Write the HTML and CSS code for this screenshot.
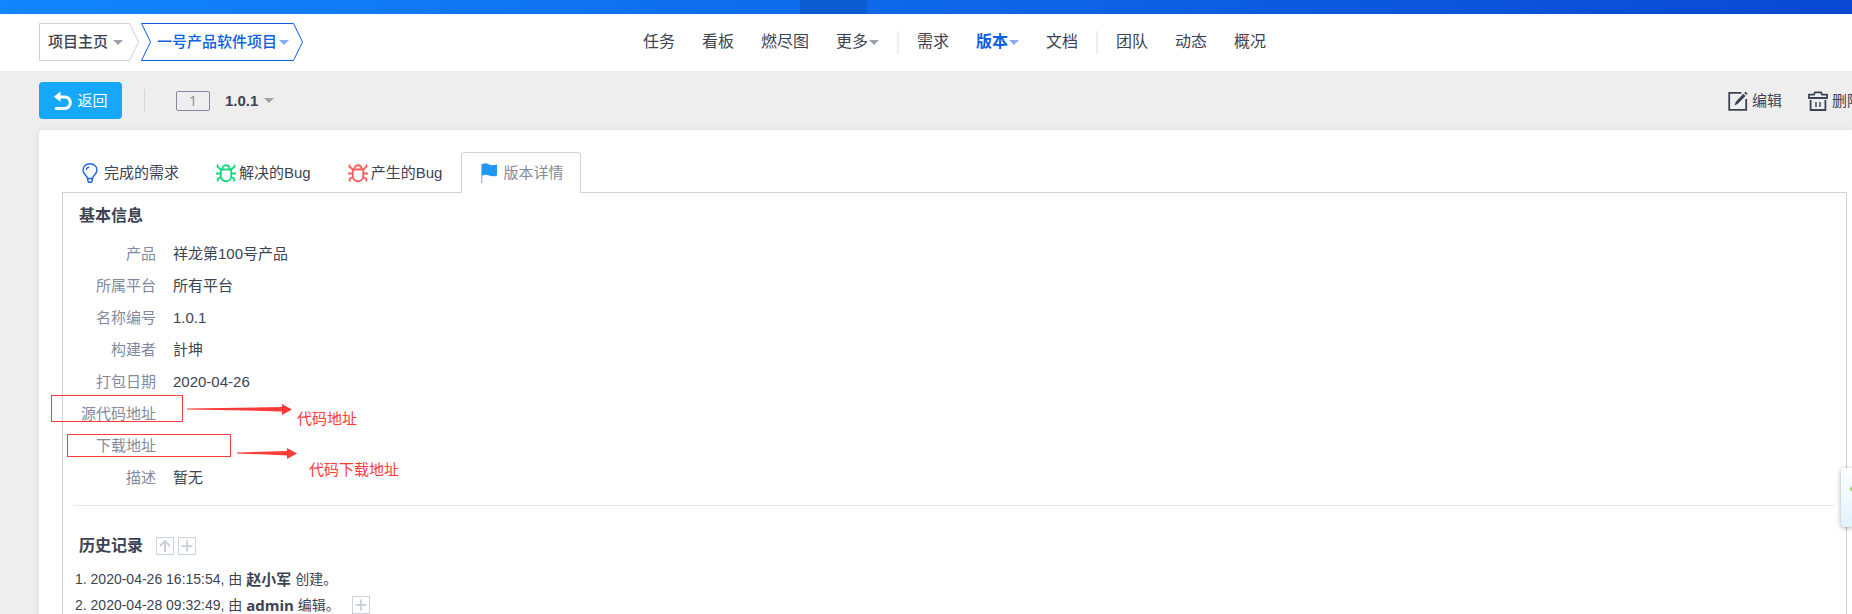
FILE: index.html
```html
<!DOCTYPE html>
<html lang="zh-CN">
<head>
<meta charset="utf-8">
<title>1.0.1 - 版本详情</title>
<link rel="stylesheet" href="styles.css">
</head>
<body>
<div class="topbar"><div class="topbar-active"></div></div>
<header class="header">
  <div class="crumbs">
    <button class="crumb crumb-home" type="button">
      <svg class="crumb-shape" viewBox="0 0 100 38" preserveAspectRatio="none"><path d="M90.5 .5H.5v37h90L99.500 19z"/></svg>
      <span>项目主页</span><i class="caret"></i>
    </button>
    <button class="crumb crumb-project" type="button">
      <svg class="crumb-shape" viewBox="0 0 162 38" preserveAspectRatio="none"><path d="M.5 .5h152l9 18.500-9 18.500H.5L9.500 19z"/></svg>
      <span>一号产品软件项目</span><i class="caret"></i>
    </button>
  </div>
  <nav class="nav">
    <a href="#">任务</a>
    <a href="#">看板</a>
    <a href="#">燃尽图</a>
    <a href="#">更多<i class="caret"></i></a>
    <span class="nav-line"></span>
    <a href="#">需求</a>
    <a href="#" class="active">版本<i class="caret"></i></a>
    <a href="#">文档</a>
    <span class="nav-line"></span>
    <a href="#">团队</a>
    <a href="#">动态</a>
    <a href="#">概况</a>
  </nav>
</header>
<div class="toolbar">
  <a class="back" href="#">
    <svg width="20" height="20" viewBox="0 0 20 20"><path d="M7.500 .5V4.500h4c4.300 0 7.300 2.800 7.300 7s-3 7.500-7.300 7.500H3.500c-2.400 0-2.400-3 0-3h8c2.500 0 4.300-1.700 4.300-4.300s-1.800-4.200-4.300-4.200h-4v3.300L.8 5.700z" fill="#fff"/></svg>
    <span>返回</span>
  </a>
  <span class="tool-line"></span>
  <span class="badge">1</span>
  <button class="version" type="button">1.0.1<i class="caret"></i></button>
  <div class="actions">
    <a href="#">
      <svg width="20" height="20" viewBox="0 0 20 20" fill="none" stroke="#3c4353"><path d="M13.500 1.800H1.200v17h17V8" stroke-width="1.800"/><path d="M6.500 14.500l1.300-3.800 7.500-8 2.300 2.300-7.800 7.800z" fill="#3c4353" stroke="none"/><path d="M16.200 1.900l1.300-1.300 2.200 2.200-1.300 1.300z" fill="#3c4353" stroke="none"/></svg>
      <span>编辑</span>
    </a>
    <a href="#">
      <svg width="20" height="20" viewBox="0 0 20 20" fill="none" stroke="#3c4353" stroke-width="1.800"><path d="M1 7V3.600h5l1-2.200h6l1 2.200h5V7zM2.600 9v10h14.800V9"/><path d="M8 11v5M12 11v5" stroke-width="1.400"/></svg>
      <span>删除</span>
    </a>
  </div>
</div>
<main class="card">
  <div class="tabs">
    <a class="tab tab-story" href="#">
      <svg width="16" height="20" viewBox="0 0 16 20" fill="none" stroke="#1a64ea" stroke-width="1.400"><path d="M5.500 15.500C5.200 12.500 1 11 1 7a7 6.300 0 0 1 14 0c0 4-4.200 5.500-4.500 8.500z"/><path d="M4.300 7c0-1.600 1.200-2.800 3-2.900" stroke-width="1.200"/><path d="M5.800 16v2l1 1.200h2.400l1-1.200v-2"/></svg>
      <span>完成的需求</span>
    </a>
    <a class="tab tab-bug" href="#">
      <svg class="green" width="20" height="20" viewBox="0 0 20 20"><use href="#bug"/></svg>
      <span>解决的Bug</span>
    </a>
    <a class="tab tab-bug" href="#">
      <svg class="red" width="20" height="20" viewBox="0 0 20 20"><g id="bug" fill="none" stroke="currentColor" stroke-width="1.800"><path d="M4.800 6.500h10.400v6.500c0 7-10.400 7-10.400 0z"/><path d="M6.500 6c0-5 7-5 7 0M1.500 1.500v2.300L5 6.500M18.500 1.500v2.300L15 6.500M0 10.500h5M15 10.500h5M5 14l-3.300 1.800v2.700M15 14l3.300 1.800v2.700"/></g></svg>
      <span>产生的Bug</span>
    </a>
    <a class="tab tab-current" href="#">
      <svg width="16" height="20" viewBox="0 0 16 20"><path d="M.7 1v19" stroke="#a9b5fa" stroke-width="1.400"/><path d="M1 1.200c3-1.500 5-.8 7 .2s4.500 1 8 .1v11c-3 1.200-5.500 1-8 0s-4-1.200-7 .2z" fill="#2196f3"/></svg>
      <span>版本详情</span>
    </a>
  </div>
  <section class="panel">
    <h2 class="title">基本信息</h2>
    <table class="info">
      <tr><th scope="row">产品</th><td>祥龙第100号产品</td></tr>
      <tr><th scope="row">所属平台</th><td>所有平台</td></tr>
      <tr><th scope="row">名称编号</th><td>1.0.1</td></tr>
      <tr><th scope="row">构建者</th><td>計坤</td></tr>
      <tr><th scope="row">打包日期</th><td>2020-04-26</td></tr>
      <tr><th scope="row">源代码地址</th><td></td></tr>
      <tr><th scope="row">下载地址</th><td></td></tr>
      <tr><th scope="row">描述</th><td>暂无</td></tr>
    </table>
    <hr class="divider">
    <div class="history-head">
      <h2 class="title">历史记录</h2>
      <button class="mini" type="button" aria-label="排序"><svg width="16" height="16" viewBox="0 0 16 16"><path d="M8 14V3M3 8l5-5 5 5"/></svg></button>
      <button class="mini" type="button" aria-label="展开全部"><svg width="16" height="16" viewBox="0 0 16 16"><path d="M8 2.500v11M2.500 8h11"/></svg></button>
    </div>
    <ol class="history">
      <li>1. 2020-04-26 16:15:54, 由 <strong>赵小军</strong> 创建。</li>
      <li>2. 2020-04-28 09:32:49, 由 <strong>admin</strong> 编辑。<button class="mini" type="button" aria-label="展开"><svg width="16" height="16" viewBox="0 0 16 16"><path d="M8 2.500v11M2.500 8h11"/></svg></button></li>
    </ol>
    <div class="mark mark-source"></div>
    <div class="mark mark-download"></div>
    <svg class="arrow arrow-source" width="105" height="12" viewBox="0 0 105 12"><path d="M0 4.500l95-1.500V0l10 5.500L95 11V7.500L60 6.500 0 5.500z"/></svg>
    <svg class="arrow arrow-download" width="60" height="12" viewBox="0 0 60 12"><path d="M0 4.500l50-1.500V0l10 5.500L50 11V7.500L30 6.500 0 5.500z"/></svg>
    <span class="note note-source">代码地址</span>
    <span class="note note-download">代码下载地址</span>
  </section>
</main>
<div class="floater"><svg width="3" height="6" viewBox="0 0 3 6"><path d="M0 3l3-3v6z" fill="#a4d867"/></svg></div>
</body>
</html>
```
FILE: styles.css
```css
* { box-sizing: border-box; }
html { overflow: hidden; }
body {
  margin: 0;
  min-height: 100vh;
  display: flex;
  flex-direction: column;
  overflow: hidden;
  background: #eee;
  color: #3c4353;
  font: 15px/20px "Liberation Sans", "Noto Sans CJK SC", sans-serif;
}
a { color: inherit; text-decoration: none; }
button { font: inherit; color: inherit; background: none; border: 0; padding: 0; }
svg { display: block; flex: none; }
span { white-space: nowrap; }
.caret {
  display: inline-block;
  border: 5px solid transparent;
  border-top-color: #9b9fa8;
  border-bottom: 0;
}

.topbar { height: 14px; flex: none; background: linear-gradient(90deg, #1286fd, #0a48d1); }
.topbar-active { width: 67px; height: 100%; margin-left: 43.2%; background: #0c5dd0; }

.header {
  display: grid;
  grid-template-columns: 1fr auto 1fr;
  align-items: center;
  height: 57px;
  flex: none;
  padding: 0 0 1px 39px;
  background: #fff;
}
.crumbs { display: flex; gap: 2px; }
.crumb {
  position: relative;
  display: flex;
  align-items: center;
  gap: 5px;
  height: 38px;
  font-weight: 500;
}
.crumb-home { width: 100px; padding-left: 9px; }
.crumb-project { width: 162px; padding-left: 16px; color: #0c60e1; gap: 2px; }
.crumb-shape { position: absolute; inset: 0; width: 100%; height: 100%; fill: none; stroke: #cdd0db; }
.crumb-project .crumb-shape { stroke: #0c60e1; }
.crumb-project .caret, .active .caret { border-top-color: #82acf3; }

.nav { display: flex; align-items: center; gap: 27px; padding-left: 18px; font-size: 16px; }
.nav a { display: flex; align-items: center; gap: 1px; white-space: nowrap; }
.nav .active { color: #0c60e1; font-weight: 700; }
.nav-line { width: 2px; height: 23px; margin: 0 -9px; background: #eee; }

.toolbar { display: flex; align-items: center; height: 59px; flex: none; padding: 0 0 0 39px; }
.back {
  display: flex;
  align-items: center;
  justify-content: center;
  gap: 4px;
  width: 83px;
  height: 37px;
  border-radius: 4px;
  background: #16a8f8;
  color: #fff;
}
.tool-line { width: 1px; height: 23px; margin: 0 31px 0 22px; background: #d5d5d5; }
.badge {
  width: 34px;
  height: 20px;
  border: 1px solid #838a9d;
  border-radius: 2px;
  color: #838a9d;
  font: 14px/17px "Open Sans", sans-serif;
  text-align: center;
}
.version { display: flex; align-items: center; gap: 6px; margin-left: 15px; font-weight: 700; }
.actions { display: flex; gap: 26px; margin: 0 -10px 0 auto; }
.actions a { display: flex; align-items: center; gap: 4px; }

.card {
  flex: 1 0 auto;
  display: flex;
  flex-direction: column;
  margin-left: 39px;
  padding: 22px 5px 0 23px;
  border-radius: 4px 0 0 0;
  background: #fff;
  box-shadow: 0 0 6px rgba(0, 0, 0, .08);
}
.tabs { display: flex; }
.tab {
  display: flex;
  align-items: center;
  height: 41px;
  margin-bottom: -1px;
  padding: 0 17px 0 19px;
  border: 1px solid transparent;
}
.tab-story { gap: 6px; }
.tab-bug { gap: 3px; }
.tab-story, .tab-bug { padding-right: 16px; }
.tab-bug .green { color: #16d87c; }
.tab-bug .red { color: #ff5d5d; }
.tab-current {
  position: relative;
  z-index: 1;
  gap: 6px;
  margin-left: 2px;
  border-color: #cbd0db;
  border-bottom-color: #fff;
  border-radius: 4px 4px 0 0;
  background: #fff;
  color: #838a9d;
}
.panel { position: relative; flex: 1; border: 1px solid #cbd0db; border-bottom: 0; padding: 13px 12px 0 11px; }
.title { margin: 0; padding-left: 5px; font-size: 16px; line-height: 20px; font-weight: 700; }
.info { margin-top: 12px; border-collapse: collapse; }
.info th, .info td { height: 32px; padding: 0; }
.info th { width: 82px; color: #838a9d; font-weight: 400; text-align: right; }
.info td { padding-left: 17px; }
.divider { height: 1px; margin: 11px 0 30px; border: 0; background: #e8e8e8; }
.history-head { display: flex; align-items: center; gap: 4px; }
.history-head .title { margin-right: 9px; }
.mini {
  display: inline-flex;
  width: 18px;
  height: 18px;
  border: 1px solid #cbd0db;
}
.mini path { fill: none; stroke: #cbd0db; stroke-width: 2; }
.history { list-style: none; margin: 10px 0 0; padding: 0 0 0 1px; font-size: 14px; }
.history li { display: flex; align-items: center; height: 26px; white-space: pre; }
.history .mini { margin-left: 12px; }
.history strong { font: 700 15px/20px "Open Sans", "Noto Sans CJK SC", sans-serif; }

/* Callouts laid over the panel */
.mark { position: absolute; border: 1px solid #fb3b37; }
.mark-source { left: -12px; top: 202px; width: 132px; height: 27px; }
.mark-download { left: 4px; top: 241px; width: 164px; height: 23px; }
.arrow { position: absolute; fill: #fb3b37; }
.arrow-source { left: 124px; top: 211px; }
.arrow-download { left: 174px; top: 255px; }
.note { position: absolute; color: #fb3b37; }
.note-source { left: 234px; top: 216px; }
.note-download { left: 246px; top: 267px; }

.floater {
  position: fixed;
  right: 0;
  top: 468px;
  width: 11px;
  height: 59px;
  padding: 18px 0 0 8px;
  border-radius: 4px 0 0 4px;
  background: linear-gradient(#fff, #dff3ff);
  box-shadow: 0 1px 5px rgba(0, 0, 0, .35);
}
```
